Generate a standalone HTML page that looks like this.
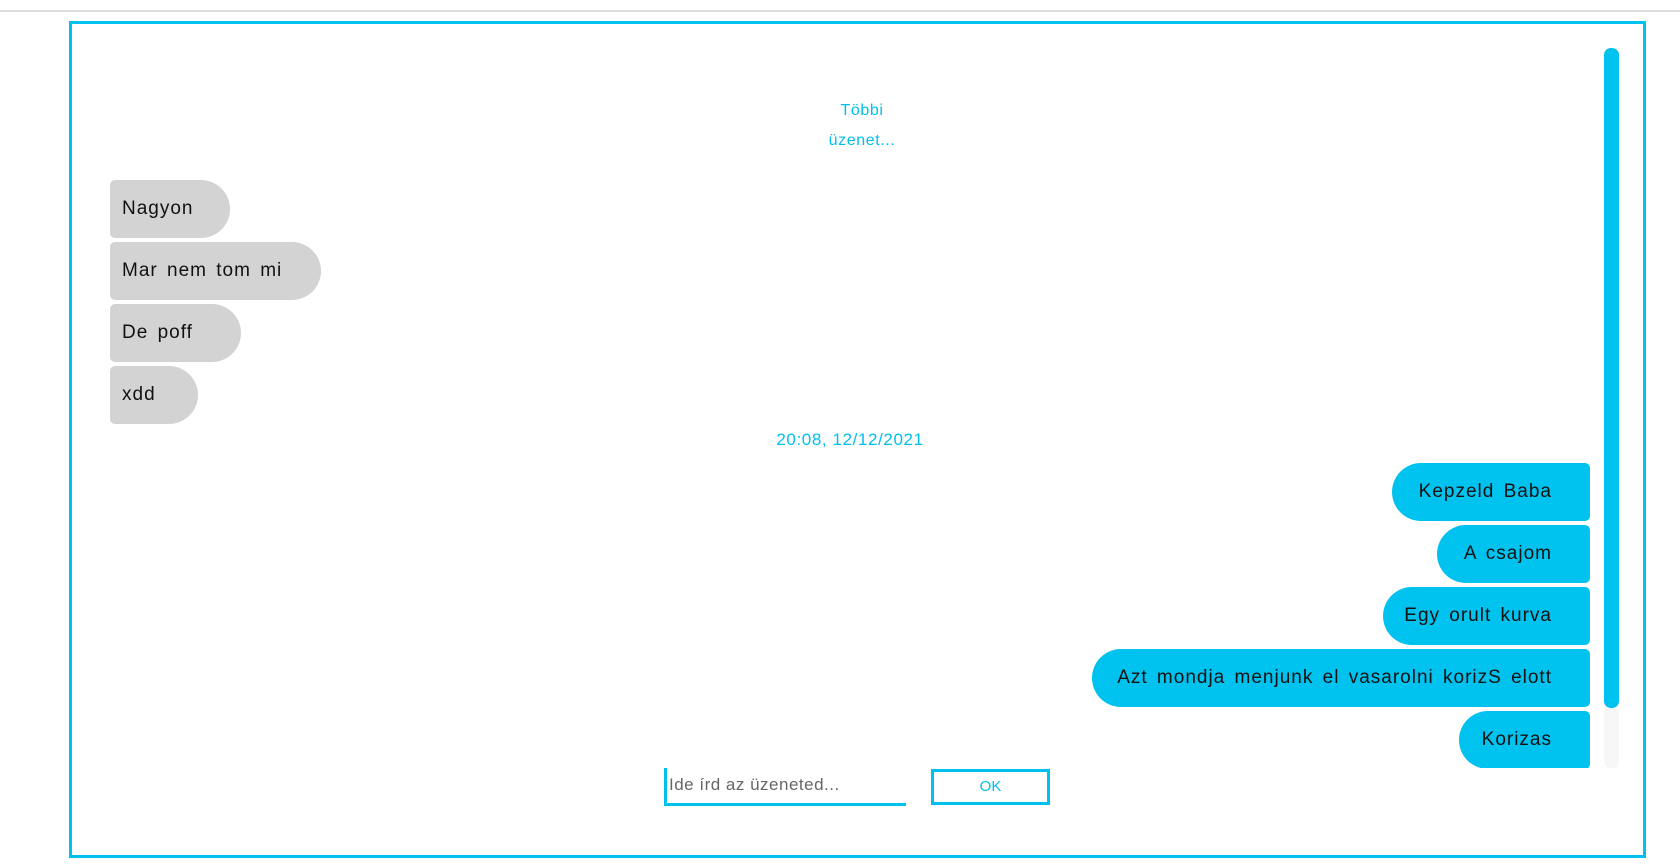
<!DOCTYPE html>
<html><head><meta charset="utf-8"><style>
*{margin:0;padding:0;box-sizing:border-box}
body{width:1680px;height:868px;background:#fff;position:relative;overflow:hidden;font-family:"Liberation Sans",sans-serif}
.line{position:absolute;left:0;top:10px;width:1680px;height:2px;background:#ddd}
.box{position:absolute;left:69px;top:21px;width:1577px;height:837px;border:3px solid #00c0ee}
.c{position:absolute;color:#00c0ee;font-size:16px;text-align:center;letter-spacing:0.6px}
.g,.b{position:absolute;height:58px;line-height:58px;font-size:19px;color:#111;white-space:nowrap;letter-spacing:1px;word-spacing:3px}
.g{background:#d3d3d3;border-radius:5px 29px 29px 5px;padding-left:12px}
.b{background:#00c2ef;border-radius:29px 5px 5px 29px;text-align:right;padding-right:38px}
.sb{position:absolute;left:1604px;top:48px;width:15px;height:720px;background:#f7f7f7;border-radius:7px}
.th{position:absolute;left:1604px;top:48px;width:15px;height:660px;background:#00c2ef;border-radius:7px}
.in{position:absolute;left:664px;top:768px;width:242px;height:38px;border-left:3px solid #00c0ee;border-bottom:3px solid #00c0ee;color:#666;font-size:17px;line-height:34px;padding-left:2px;letter-spacing:0.5px}
.ok{position:absolute;left:931px;top:769px;width:119px;height:36px;border:3px solid #00c0ee;color:#00c0ee;font-size:15px;text-align:center;line-height:30px}
</style></head><body>
<div class="line"></div>
<div class="box"></div>
<div class="c" style="left:812px;top:96px;width:100px;line-height:30px">Többi<br>üzenet...</div>
<div class="g" style="left:110px;top:180px;width:120px">Nagyon</div>
<div class="g" style="left:110px;top:242px;width:211px">Mar nem tom mi</div>
<div class="g" style="left:110px;top:304px;width:131px">De poff</div>
<div class="g" style="left:110px;top:366px;width:88px">xdd</div>
<div class="c" style="left:750px;top:430px;width:200px;font-size:17px">20:08, 12/12/2021</div>
<div style="position:absolute;left:0;top:0;width:1680px;height:768px;overflow:hidden">
<div class="b" style="left:1392px;top:463px;width:198px">Kepzeld Baba</div>
<div class="b" style="left:1437px;top:525px;width:153px">A csajom</div>
<div class="b" style="left:1383px;top:587px;width:207px">Egy orult kurva</div>
<div class="b" style="left:1092px;top:649px;width:498px">Azt mondja menjunk el vasarolni korizS elott</div>
<div class="b" style="left:1459px;top:711px;width:131px">Korizas</div>
</div>
<div class="sb"></div><div class="th"></div>
<div class="in">Ide írd az üzeneted...</div>
<div class="ok">OK</div>
</body></html>
